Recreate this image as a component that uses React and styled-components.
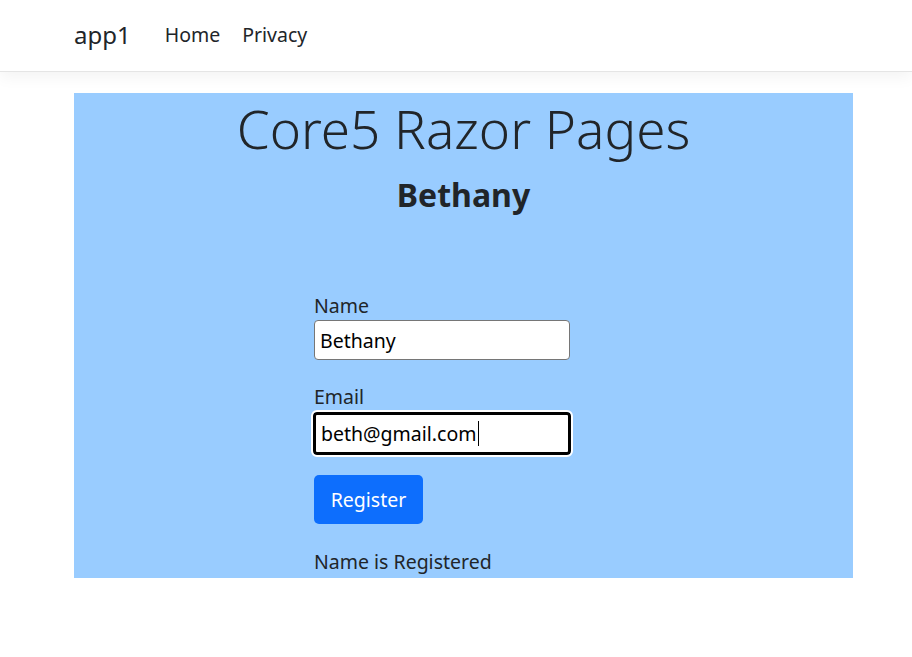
import styled, { createGlobalStyle } from "styled-components";

const GlobalStyle = createGlobalStyle`
  * { box-sizing: border-box; }
  body {
    margin: 0;
    background: #fff;
    color: #212529;
    font-family: "Noto Sans", "Open Sans", sans-serif;
    font-size: 20px;
  }
`;

function App() {
    return (
        <>
            <GlobalStyle />
            <StNavbar>
                <StNavInner>
                    <StBrand>app1</StBrand>
                    <StNavLink>Home</StNavLink>
                    <StNavLink>Privacy</StNavLink>
                </StNavInner>
            </StNavbar>
            <StMain>
                <StTitle>Core5 Razor Pages</StTitle>
                <StSubTitle>Bethany</StSubTitle>
                <StForm>
                    <StGroup>
                        <StLabel>Name</StLabel>
                        <StInput defaultValue="Bethany" />
                    </StGroup>
                    <StGroup>
                        <StLabel>Email</StLabel>
                        <StField>
                            <StInput defaultValue="beth@gmail.com" $focused />
                            <StCaret />
                        </StField>
                    </StGroup>
                    <StButton type="button">Register</StButton>
                    <StMessage>Name is Registered</StMessage>
                </StForm>
            </StMain>
        </>
    );
}

const StNavbar = styled.nav`
    height: 72px;
    background: #fff;
    border-bottom: 1px solid #e5e5e5;
    box-shadow: 0 5px 15px rgba(0, 0, 0, 0.05);
`;
const StNavInner = styled.div`
    height: 100%;
    margin: 0 59px 0 74px;
    display: flex;
    align-items: center;
    padding-bottom: 2px;
`;
const StBrand = styled.span`
    font-size: 24px;
    margin-right: 34px;
    color: #212529;
`;
const StNavLink = styled.span`
    font-size: 19.5px;
    margin-right: 22px;
    color: #212529;
`;
const StMain = styled.main`
    margin: 21px 59px 0 74px;
    background: #99ccff;
    height: 485px;
    padding-top: 4px;
    display: flex;
    flex-direction: column;
`;
const StTitle = styled.h1`
    margin: 0;
    text-align: center;
    font-size: 53px;
    font-weight: 300;
    line-height: 1.2;
`;
const StSubTitle = styled.h3`
    margin: 15px 0 0;
    text-align: center;
    font-size: 32px;
    font-weight: 700;
    line-height: 1.2;
`;
const StForm = styled.form`
    margin: 80px 0 0 240px;
    width: 256px;
    display: flex;
    flex-direction: column;
`;
const StGroup = styled.div`
    display: flex;
    flex-direction: column;
    margin-bottom: 20px;
    & + & {
        margin-top: 5px;
    }
`;
const StLabel = styled.label`
    font-size: 19.5px;
    line-height: 1.2;
    margin-bottom: 3px;
`;
const StField = styled.div`
    position: relative;
`;
const StInput = styled.input`
    display: block;
    font-family: inherit;
    font-size: 19.5px;
    color: #000;
    width: ${(p) => (p.$focused ? "258px" : "256px")};
    height: ${(p) => (p.$focused ? "43px" : "40px")};
    margin-left: ${(p) => (p.$focused ? "-1px" : "0")};
    padding: 0 5px;
    background: #fff;
    border: ${(p) => (p.$focused ? "3px solid #000" : "1px solid #767676")};
    border-radius: 4px;
    outline: ${(p) => (p.$focused ? "2px solid #fff" : "none")};
    outline-offset: 0;
`;
const StCaret = styled.span`
    position: absolute;
    left: 164px;
    top: 9px;
    width: 1px;
    height: 25px;
    background: #000;
`;
const StButton = styled.button`
    align-self: flex-start;
    font-family: inherit;
    font-size: 19.5px;
    color: #fff;
    background: #0d6efd;
    border: none;
    border-radius: 5px;
    width: 109px;
    height: 49px;
`;
const StMessage = styled.p`
    margin: 26px 0 0;
    font-size: 19.5px;
    line-height: 1.2;
`;

export default App;
